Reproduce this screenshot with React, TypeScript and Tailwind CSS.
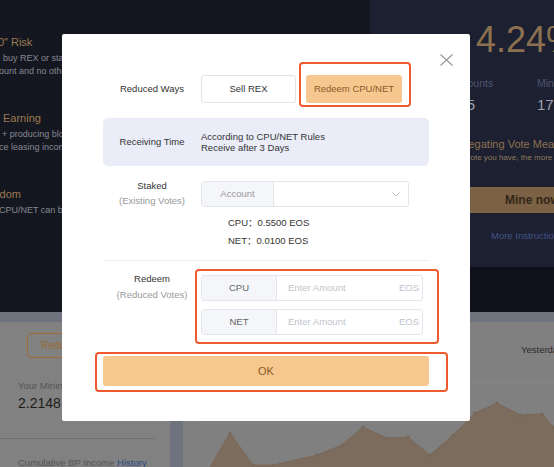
import React from "react";

function Chevron() {
  return (
    <svg width="8" height="5" viewBox="0 0 8 5" fill="none">
      <path d="M0.5 0.5 L4 4 L7.5 0.5" stroke="#c0c4cc" strokeWidth="1" />
    </svg>
  );
}

function CloseIcon() {
  return (
    <svg width="13" height="12" viewBox="0 0 13 12" fill="none">
      <path d="M0.5 0.5 L12.5 11.5 M12.5 0.5 L0.5 11.5" stroke="#9a9a9a" strokeWidth="1.2" />
    </svg>
  );
}

function Chart() {
  const pts: [number, number][] = [
    [27, 145],
    [47, 111],
    [70, 143],
    [90, 143],
    [134, 133],
    [159, 123],
    [180, 105],
    [204, 116],
    [225, 115],
    [247, 133],
    [270, 113],
    [292, 91],
    [314, 81],
    [337, 93],
    [359, 92],
    [371, 105],
  ];
  const poly = [...pts, [371, 145] as [number, number]].map((p) => p.join(",")).join(" ");
  return (
    <svg className="absolute inset-0" width="371" height="145" viewBox="0 0 371 145">
      <line x1="20" y1="60" x2="371" y2="60" stroke="#878787" strokeWidth="1" />
      <line x1="20" y1="101" x2="371" y2="101" stroke="#878787" strokeWidth="1" />
      <line x1="20" y1="142" x2="371" y2="142" stroke="#878787" strokeWidth="1" />
      <polygon points={poly} fill="#7c6c5d" />
      <polyline points={pts.map((p) => p.join(",")).join(" ")} fill="none" stroke="#7a6a5a" strokeWidth="1" />
      {pts.slice(1).map((p, i) => (
        <circle key={i} cx={p[0]} cy={p[1]} r="1.5" fill="#776656" />
      ))}
    </svg>
  );
}

export default function App() {
  return (
    <div className="relative w-[554px] h-[467px] overflow-hidden font-['Liberation_Sans','Noto_Sans_CJK_SC',sans-serif]">
      {/* Background page (dimmed) */}
      <div className="flex h-[312px]">
        <div className="w-[370px] shrink-0 bg-[#151720] pt-[34px] whitespace-nowrap overflow-hidden">
          <div className="h-[76px]">
            <p className="ml-[-6px] text-[11px] leading-[16px] text-[#9b7a4f]">"0" Risk</p>
            <p className="mt-[2px] ml-[3px] text-[9px] leading-[13px] text-[#858892]">buy REX or stake EOS for resources</p>
            <p className="ml-[-1px] text-[9px] leading-[13px] text-[#858892]">ount and no other cost required</p>
          </div>
          <div className="h-[76px]">
            <p className="ml-[3px] text-[11px] leading-[16px] text-[#9b7a4f]">Earning</p>
            <p className="mt-[2px] ml-[2px] text-[9px] leading-[13px] text-[#858892]">+ producing block rewards</p>
            <p className="ml-[-1px] text-[9px] leading-[13px] text-[#858892]">ce leasing income</p>
          </div>
          <div className="h-[76px]">
            <p className="ml-[-23px] text-[11px] leading-[16px] text-[#9b7a4f]">Freedom</p>
            <p className="mt-[2px] ml-[-1px] text-[9px] leading-[13px] text-[#858892]">CPU/NET can be redeemed</p>
          </div>
        </div>
        <div className="flex-1 min-w-0 flex flex-col whitespace-nowrap overflow-hidden">
          <div className="h-[267px] bg-[#1c2030] pt-[22px]">
            <p className="ml-[106px] text-[36px] leading-[36px] text-[#8c7150]">4.24%</p>
            <div className="mt-[18px] flex">
              <div className="ml-[80px] w-[87px] shrink-0">
                <p className="text-[10.5px] leading-[14px] text-[#4e5670]">Accounts</p>
                <p className="mt-[6px] text-[15px] leading-[18px] text-[#9ca1ae]">365</p>
              </div>
              <div className="shrink-0">
                <p className="text-[10.5px] leading-[14px] text-[#4e5670]">Mining Rewards</p>
                <p className="mt-[6px] text-[15px] leading-[18px] text-[#9ca1ae]">17.5849</p>
              </div>
            </div>
            <p className="mt-[23px] ml-[82px] text-[11px] leading-[14px] text-[#8c7150]">Delegating Vote Measures</p>
            <p className="mt-[2px] ml-[60px] text-[8px] leading-[10px] text-[#8f7a5e]">The more vote you have, the more income you get</p>
            <div className="mt-[24px] ml-[20px] w-[300px] h-[26px] bg-[#7b6244] flex items-center pl-[115px]">
              <span className="text-[12px] font-bold text-[#33261a]">Mine now</span>
            </div>
            <p className="mt-[16px] ml-[121px] text-[9.5px] leading-[14px] text-[#44558a]">More Instructions</p>
          </div>
          <div className="flex-1 bg-[#0f111a]" />
        </div>
      </div>
      <div className="flex h-[155px] bg-[#6f737d] pt-[10px] gap-[13px]">
        <div className="w-[170px] shrink-0 bg-[#818181] pt-[11px] whitespace-nowrap overflow-hidden">
          <div className="ml-[27px] w-[90px] h-[25px] border border-[#9c6b36] rounded-[4px] flex items-center px-[13px] text-[10px] text-[#9c6b33]">
            Reduce Votes
          </div>
          <p className="mt-[21px] ml-[18px] text-[9.5px] leading-[14px] text-[#555]">Your Mining Rewards</p>
          <p className="mt-[1px] ml-[18px] text-[14px] leading-[18px] text-[#1c1c1c]">2.2148 EOS</p>
          <div className="mt-[26px] w-[155px] h-px bg-[#717171]" />
          <p className="mt-[17px] ml-[18px] text-[9.5px] leading-[14px] text-[#555]">
            Cumulative BP Income <span className="text-[#2a4787]">History</span>
          </p>
        </div>
        <div className="relative flex-1 bg-[#808080] overflow-hidden">
          <Chart />
          <p className="relative pt-[21px] pl-[338px] text-[9.5px] leading-[14px] text-[#2b2b2b] whitespace-nowrap">Yesterday</p>
        </div>
      </div>

      {/* Modal */}
      <div className="absolute left-[62px] top-[34px] w-[408px] h-[387px] bg-white rounded-[2px] pt-[41px] px-[41px] text-[9.5px] text-[#333]">
        <button className="absolute top-[20px] right-[17px] leading-none">
          <CloseIcon />
        </button>

        {/* Reduced Ways */}
        <div className="flex items-center h-[28px]">
          <div className="w-[98px] text-center">Reduced Ways</div>
          <div className="flex gap-[10px]">
            <button className="w-[95px] h-[28px] border border-[#e3e3e3] rounded-[3px] bg-white text-[#333]">Sell REX</button>
            <div className="relative">
              <button className="w-[96px] h-[28px] rounded-[3px] bg-[#f6c78f] text-[#8a5a28]">Redeem CPU/NET</button>
              <div className="absolute left-[-7px] top-[-13px] right-[-9px] bottom-[-4px] border-2 border-[#ee5a2d] rounded-[4px]" />
            </div>
          </div>
        </div>

        {/* Receiving Time */}
        <div className="mt-[15px] h-[48px] bg-[#eaedf8] rounded-[5px] flex items-center">
          <div className="w-[98px] text-center">Receiving Time</div>
          <div className="leading-[11px]">
            <p>According to CPU/NET Rules</p>
            <p>Receive after 3 Days</p>
          </div>
        </div>

        {/* Staked */}
        <div className="mt-[15px] h-[26px] flex items-center">
          <div className="w-[98px] text-center leading-[15px] mt-[-2px]">
            <p>Staked</p>
            <p className="text-[#999]">(Existing Votes)</p>
          </div>
          <div className="w-[208px] h-[26px] border border-[#e4e6eb] rounded-[3px] flex">
            <div className="w-[72px] bg-[#f5f6f9] border-r border-[#e4e6eb] flex items-center justify-center text-[#999]">Account</div>
            <div className="flex-1 flex items-center justify-end pr-[8px]">
              <Chevron />
            </div>
          </div>
        </div>
        <div className="mt-[7px] pl-[125px] leading-[18px]">
          <p>CPU：0.5500 EOS</p>
          <p>NET：0.0100 EOS</p>
        </div>

        <div className="mt-[10px] h-px bg-[#ececec]" />

        {/* Redeem */}
        <div className="mt-[14px] flex items-start">
          <div className="w-[98px] text-center leading-[16px] mt-[-4px]">
            <p>Redeem</p>
            <p className="text-[#999]">(Reduced Votes)</p>
          </div>
          <div className="relative w-[222px] flex flex-col gap-[8px]">
            {["CPU", "NET"].map((k) => (
              <div key={k} className="h-[26px] border border-[#e4e6eb] rounded-[3px] flex">
                <div className="w-[75px] bg-[#f5f6f9] border-r border-[#e4e6eb] flex items-center justify-center text-[#666]">{k}</div>
                <div className="flex-1 flex items-center justify-between pl-[11px] pr-[3px] text-[#c0c4cc]">
                  <span>Enter Amount</span>
                  <span>EOS</span>
                </div>
              </div>
            ))}
            <div className="absolute left-[-6px] top-[-6px] right-[-16px] bottom-[-9px] border-2 border-[#ee5a2d] rounded-[4px]" />
          </div>
        </div>

        {/* OK */}
        <div className="relative mt-[21px]">
          <button className="w-full h-[30px] rounded-[3px] bg-[#f6c78f] text-[11px] text-[#8a5a28]">OK</button>
          <div className="absolute left-[-8px] top-[-4px] right-[-19px] bottom-[-6px] border-2 border-[#ee5a2d] rounded-[4px]" />
        </div>
      </div>
    </div>
  );
}
